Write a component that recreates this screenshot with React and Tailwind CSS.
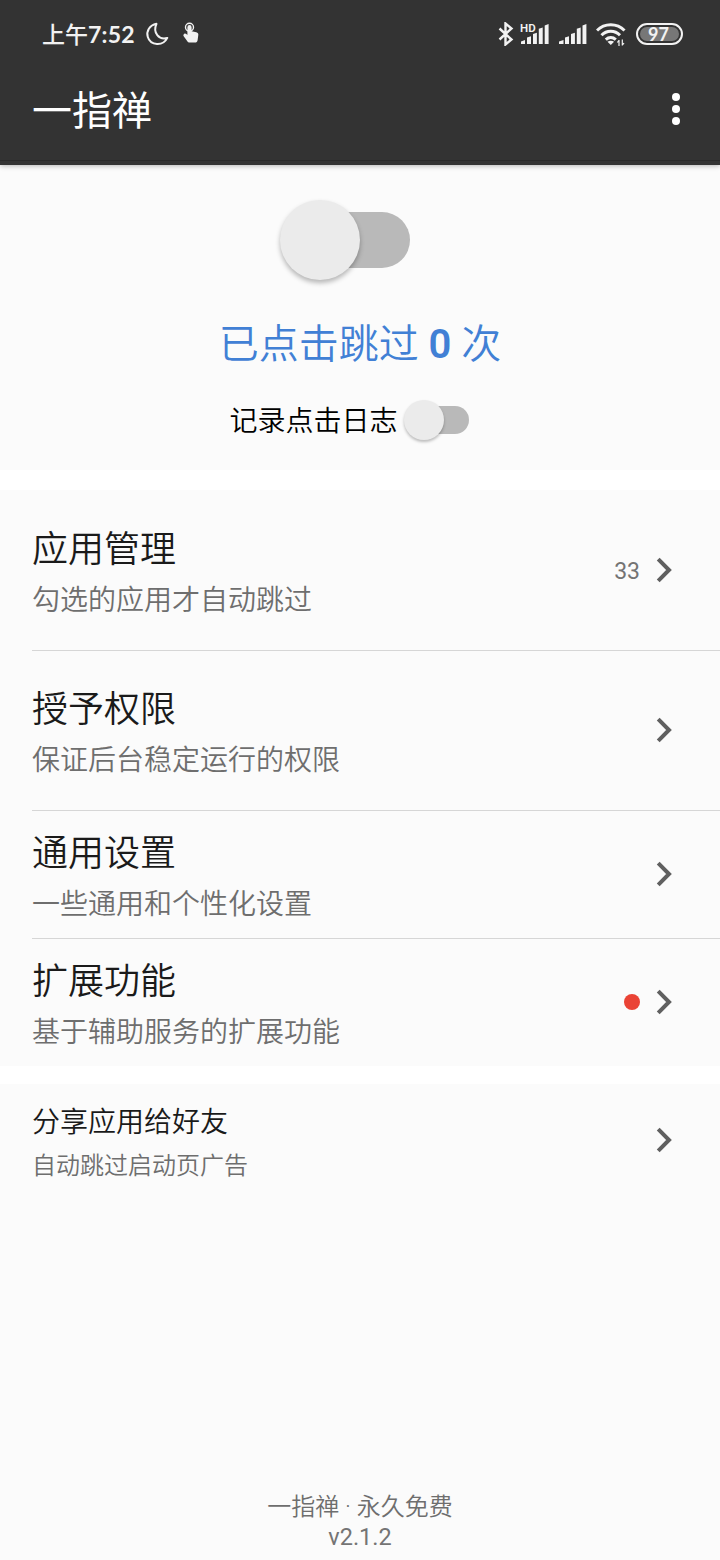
import React from "react";

function Chevron() {
  return (
    <svg className="block h-8 w-8 shrink-0" viewBox="0 0 32 32" fill="none" stroke="#606060" strokeWidth="4">
      <path d="M10.200 5.200 21 16 10.200 26.800" />
    </svg>
  );
}

function StatusBar() {
  return (
    <div className="flex h-[68px] items-center justify-between pl-[42px] pr-[38px] text-[#f2f2f2]">
      <div className="flex items-center">
        <span className="flex w-[94px] items-center whitespace-nowrap leading-8">
          <span className="pb-[2px] font-['Noto_Sans_CJK_SC',sans-serif] text-[23px] font-medium">上午</span>
          <span className="pb-px font-['Lato',sans-serif] text-[23px] font-bold tracking-[0.2px]">7:52</span>
        </span>
        <svg className="ml-[9px] h-6 w-6" viewBox="0 0 24 24" fill="none" stroke="currentColor" strokeWidth="2" strokeLinejoin="round">
          <path d="M11.500 1.800C4.500 3.200 1 9.300 2.800 15c2.700 8.800 15.200 9.600 19.500.9C14 18.400 7.500 10.500 11.500 1.800Z" />
        </svg>
        <svg className="ml-[13px] h-6 w-5" viewBox="0 0 20 24">
          <circle cx="7.500" cy="5.300" r="4" fill="none" stroke="currentColor" strokeWidth="1.400" />
          <path d="M5.400 5.200a2.100 2.100 0 0 1 4.200 0v4l4.700 1c1.500.4 2.200 1.300 2 2.800l-.7 5.200c-.3 1.600-1.200 2.400-2.500 2.400H7.600c-1.100 0-1.600-.5-2.100-1.200l-3.800-5.200c-.5-.8-.4-1.700.4-2.300.7-.5 1.500-.4 2.200.2l1.100.9Z" fill="currentColor" />
        </svg>
      </div>
      <div className="flex items-center">
        <svg className="h-6 w-4" viewBox="0 0 16 24" fill="none" stroke="currentColor" strokeWidth="2.400">
          <path d="m1.500 6.500 12 11-6 5V1.500l6 5-12 11" />
        </svg>
        <svg className="ml-[6px] h-6 w-[30px]" viewBox="0 0 30 24" fill="currentColor">
          <text x="0" y="9.500" fontFamily="Roboto, sans-serif" fontSize="11.500" fontWeight="600">HD</text>
          <path d="M1 22v-2.500l4-1.500v4ZM7 22v-6.500l4-1.300V22ZM13 22V12l3.900-1.300V22ZM18.800 22V6.800l3.900-1.300V22ZM24.700 22V3.500L28.600 2v20Z" />
        </svg>
        <svg className="ml-[8px] h-6 w-[30px]" viewBox="0 0 30 24" fill="currentColor">
          <path d="M1 22v-2.500l4.500-1.500v4ZM7 22v-6.500l4-1.300V22ZM13 22V12l3.900-1.300V22ZM18.800 22V6.800l3.900-1.300V22ZM24.500 22V3.500L28.400 2v20Z" />
        </svg>
        <svg className="ml-[8px] h-6 w-[30px]" viewBox="0 0 30 24" fill="none" stroke="currentColor" strokeWidth="3">
          <path d="M1 8.500C8.500.8 21 .8 28.500 8.500M5.500 13.200c5.200-5.300 13.300-5.300 18.500 0M9.800 17.600c3-2.700 7-2.700 10 0" />
          <path d="m11.500 19.700 3.300 3.300 3.300-3.300c-2-1.400-4.600-1.400-6.600 0Z" fill="currentColor" stroke="none" />
          <path d="M23 18v6M26.300 17.500v6M21.300 20.500l1.700-2.200M28 21l-1.700 2.200" strokeWidth="1.200" />
        </svg>
        <div className="ml-[10px] mr-[-1px] flex h-[22px] w-[47px] items-center justify-center rounded-full border-2 border-[#f2f2f2] bg-[#333333] p-[2px]">
          <div className="flex h-full w-full items-center justify-center rounded-full bg-[#777777] pr-[2px] font-['Lato',sans-serif] text-[18px] font-bold leading-none">
            97
          </div>
        </div>
      </div>
    </div>
  );
}

function Header() {
  return (
    <header className="relative h-[165px] bg-[#333333] shadow-[0_1px_5px_rgba(0,0,0,0.28)]">
      <StatusBar />
      <div className="flex h-[93px] items-start justify-between border-b border-[#292929] pl-8 pr-[39px] pt-[19px]">
        <h1 className="text-[40px] font-normal leading-[50px] text-white">一指禅</h1>
        <div className="mt-[6px] flex w-[10px] flex-col items-center gap-1">
          <span className="h-2 w-2 rounded-full bg-white" />
          <span className="h-2 w-2 rounded-full bg-white" />
          <span className="h-2 w-2 rounded-full bg-white" />
        </div>
      </div>
    </header>
  );
}

function Row({ title, subtitle, extra, className, divider }) {
  return (
    <div className={className}>
      <div className="flex-1 pt-[9px]">
        <div className="text-[36px] leading-[52px] text-[#1a1a1a]">{title}</div>
        <div className="text-[28px] leading-[49px] text-[#6e6e6e]">{subtitle}</div>
      </div>
      {extra}
      <Chevron />
      {divider && <div className="absolute bottom-[-1px] left-8 right-0 h-px bg-[#d6d6d6]" />}
    </div>
  );
}

export default function App() {
  return (
    <div className="flex h-[1560px] w-[720px] flex-col bg-white font-['Roboto','Noto_Sans_CJK_SC',sans-serif] font-[350]">
      <Header />
      <section className="flex h-[305px] flex-col items-center bg-[#fbfbfb] pt-[34px]">
        <div className="mr-[30px] flex h-[82px] w-[130px] items-center">
          <div className="relative z-10 h-20 w-20 shrink-0 rounded-full bg-[#ebebeb] shadow-[0_3px_5px_rgba(0,0,0,0.28)]" />
          <div className="-ml-[68px] h-14 w-[118px] shrink-0 rounded-full bg-[#b9b9b9]" />
        </div>
        <div className="mt-[40px] text-[40px] leading-[48px] text-[#4180d5]">
          已点击跳过 <b className="font-semibold">0</b> 次
        </div>
        <div className="mr-[22px] mt-[31px] flex h-10 items-center">
          <span className="pt-1 text-[28px] leading-10 text-black">记录点击日志</span>
          <div className="ml-[6px] flex h-10 w-[65px] items-center">
            <div className="relative z-10 h-10 w-10 shrink-0 rounded-full bg-[#ebebeb] shadow-[0_2px_3px_rgba(0,0,0,0.25)]" />
            <div className="-ml-[34px] h-7 w-[59px] shrink-0 rounded-full bg-[#b9b9b9]" />
          </div>
        </div>
      </section>
      <main className="mt-5 bg-[#fbfbfb]">
        <Row className="relative flex h-40 items-center pl-8 pr-10" title="应用管理" subtitle="勾选的应用才自动跳过" extra={<span className="mr-2 pt-[5px] text-[23px] font-normal text-[#747474]">33</span>} divider />
        <Row className="relative flex h-40 items-center pl-8 pr-10" title="授予权限" subtitle="保证后台稳定运行的权限" divider />
        <Row className="relative flex h-32 items-center pl-8 pr-10" title="通用设置" subtitle="一些通用和个性化设置" divider />
        <Row className="relative flex h-32 items-center pl-8 pr-10" title="扩展功能" subtitle="基于辅助服务的扩展功能" extra={<span className="mr-2 h-4 w-4 rounded-full bg-[#ea4335]" />} />
      </main>
      <section className="mt-[18px] flex flex-1 flex-col bg-[#fbfbfb]">
        <div className="flex h-28 items-center pl-8 pr-10">
          <div className="flex-1 pt-[7px]">
            <div className="text-[28px] leading-[46px] text-[#1a1a1a]">分享应用给好友</div>
            <div className="text-[24px] leading-[41px] text-[#6e6e6e]">自动跳过启动页广告</div>
          </div>
          <Chevron />
        </div>
        <footer className="mt-auto pb-2 text-center text-[24px] leading-[30px] text-[#6e6e6e]">
          <div>一指禅 · 永久免费</div>
          <div className="text-[23.500px] font-normal text-[#747474]">v2.1.2</div>
        </footer>
      </section>
    </div>
  );
}
